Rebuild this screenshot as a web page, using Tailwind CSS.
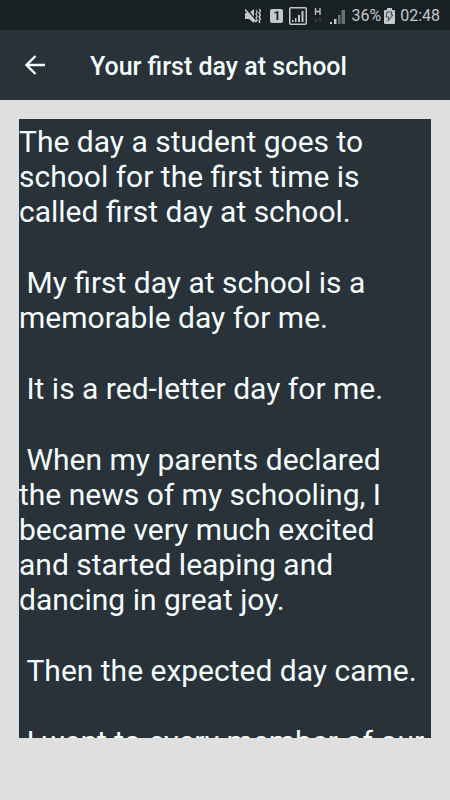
<!DOCTYPE html>
<html lang="en">
<head>
  <meta charset="UTF-8" />
  <meta name="viewport" content="width=device-width, initial-scale=1.0" />
  <title>Your first day at school</title>
  <script src="https://cdn.jsdelivr.net/npm/@tailwindcss/browser@4"></script>
</head>

<body class="h-screen flex flex-col overflow-hidden bg-[#e0dfe0] font-['Roboto',sans-serif] text-[#f5fcfd]">

  <!-- Status bar -->
  <div class="h-[30px] shrink-0 flex items-center justify-end pt-0.5 pr-[10px] bg-[#192023] text-[#c3c8ca]">
    <svg class="w-4 h-4 mr-[9px]" viewBox="0 0 16 16" fill="none" stroke="currentColor">
      <path d="M0 5h4l5-4v14l-5-4H0z" fill="currentColor" stroke="none" />
      <path d="M2 1l10 13" stroke="#192023" stroke-width="1.500" />
      <path d="M0 1.500l11 12.500" stroke-width="1.800" />
      <path d="M11 2l1.200 2-1.200 2 1.200 2-1.200 2 1.200 2-1.200 2" stroke-width="1.200" />
      <path d="M14.500 1L15.500 3l-1.500 2 1.500 2-1.500 2 1.500 2-1.500 2 1 2" stroke-width="1.400" />
    </svg>
    <span class="w-[13px] h-[14px] mr-[6px] rounded-[2px] bg-[#c3c8ca] text-[#192023] text-[12px] leading-[14px] font-bold text-center">1</span>
    <svg class="w-[18px] h-[18px] mr-[7px]" viewBox="0 0 18 18">
      <rect x=".75" y=".75" width="16.500" height="16.500" rx="1" fill="none" stroke="currentColor" stroke-width="1.500" />
      <path d="M3 13h1.500v2H3zM6 11h1.500v4H6zM9 8h2v7H9zM12.500 4h2v11h-2z" fill="currentColor" />
    </svg>
    <svg class="w-2 h-[18px] mr-[8px]" viewBox="0 0 8 18" fill="none" stroke="currentColor">
      <path d="M1.500 1v7M6 1v7M1.500 4.500H6" stroke-width="1.300" />
      <path d="M2 11v4M.5 13.500L2 15l1.500-1.500M6 15v-4M4.500 12.500L6 11l1.500 1.500" stroke="#42494c" />
    </svg>
    <svg class="w-[15px] h-[15px] mr-[6px]" viewBox="0 0 15 15">
      <path d="M0 13h2v2H0zM4 10h2.500v5H4z" fill="currentColor" />
      <path d="M8 6h2.500v9H8zM11.500 1H15v14h-3.500z" fill="#697074" />
    </svg>
    <span class="text-base leading-5 mr-[3px]">36%</span>
    <svg class="w-[11px] h-4 mr-[5px]" viewBox="0 0 11 16">
      <path d="M3 0h5v2h2q1 0 1 1v12q0 1-1 1H1q-1 0-1-1V3q0-1 1-1h2z" fill="currentColor" />
      <path d="M3 4l5 0-1 3h2l-5 6 1-4H2z" fill="none" stroke="#40484b" />
    </svg>
    <span class="text-base leading-5">02:48</span>
  </div>

  <!-- App bar -->
  <header class="h-[70px] shrink-0 flex items-center bg-[#283238]">
    <button type="button" aria-label="Back" class="w-[70px] h-full flex items-center justify-center">
      <svg class="w-5 h-5" viewBox="0 0 20 20" fill="none" stroke="currentColor" stroke-width="2.300">
        <path d="M20 10H1.500M10.500 1L1.500 10l9 9" />
      </svg>
    </button>
    <h1 class="ml-5 pt-[3px] text-[25px] leading-8 font-medium">Your first day at school</h1>
  </header>

  <!-- Essay text, cut off at the bottom of the box -->
  <main class="flex-1 min-h-0 flex px-[19px] pt-[19px] pb-[62px]">
    <article class="flex-1 flex flex-col gap-9 pt-[5px] overflow-hidden whitespace-pre-wrap bg-[#283238] text-[30px] leading-[35px]">
      <p class="shrink-0">The day a student goes to school for the first time is called first day at school.</p>
      <p class="shrink-0"> My first day at school is a memorable day for me.</p>
      <p class="shrink-0"> It is a red-letter day for me.</p>
      <p class="shrink-0"> When my parents declared<br>the news of my schooling, I became very much excited and started leaping and dancing in great joy.</p>
      <p class="shrink-0"> Then the expected day came.</p>
      <p class="shrink-0"> I went to every member of our</p>
    </article>
  </main>

</body>
</html>
